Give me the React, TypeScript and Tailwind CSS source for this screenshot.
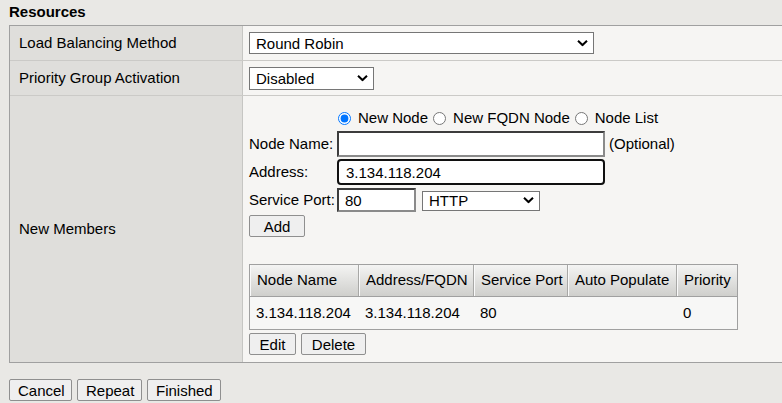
const Chevron = () => (
    <svg className="pointer-events-none absolute right-[6px] top-1/2 -translate-y-1/2" width="11" height="7" viewBox="0 0 11 7">
        <path d="M1 1.2 L5.5 5.5 L10 1.2" fill="none" stroke="#000" strokeWidth="2" />
    </svg>
);

const Select = ({ value, options, className }: { value: string; options: string[]; className: string }) => (
    <div className={`relative ${className}`}>
        <select
            defaultValue={value}
            className="h-full w-full appearance-none border border-[#767676] bg-white pl-[6px] pr-6 text-[15px] leading-none outline-none"
        >
            {options.map((o) => (
                <option key={o}>{o}</option>
            ))}
        </select>
        <Chevron />
    </div>
);

const Btn = ({ label, className = "" }: { label: string; className?: string }) => (
    <button className={`h-[22px] rounded-[2px] border border-[#8f8f8f] bg-[#efefef] px-[8px] text-[15px] leading-none text-black ${className}`}>
        {label}
    </button>
);

const App = () => {
    const columns = [
        { name: "Node Name", w: "w-[109px]" },
        { name: "Address/FQDN", w: "w-[115px]" },
        { name: "Service Port", w: "w-[94px]" },
        { name: "Auto Populate", w: "w-[109px]" },
        { name: "Priority", w: "flex-1" },
    ];
    const member = ["3.134.118.204", "3.134.118.204", "80", "", "0"];

    return (
        <div className="min-h-[403px] w-full overflow-hidden bg-[#e9e8e5] font-['Liberation_Sans',Arial,sans-serif] text-[15px] text-black">
            <div className="h-[25px] pl-[9px] pt-[3px] font-bold leading-[18px]">Resources</div>

            <div className="ml-[9px] border-y border-l border-[#a0a0a0]">
                {/* Load balancing */}
                <div className="flex h-[35px] border-b border-[#cbcac7]">
                    <div className="flex w-[233px] items-center border-r border-[#c6c6c3] bg-[#dfdedb] pl-[9px]">Load Balancing Method</div>
                    <div className="flex flex-1 items-center bg-[#f6f5f3] pl-[6px]">
                        <Select value="Round Robin" options={["Round Robin", "Ratio (member)", "Least Connections (member)"]} className="h-[22px] w-[345px]" />
                    </div>
                </div>

                {/* Priority group */}
                <div className="flex h-[35px] border-b border-[#cbcac7]">
                    <div className="flex w-[233px] items-center border-r border-[#c6c6c3] bg-[#dfdedb] pl-[9px]">Priority Group Activation</div>
                    <div className="flex flex-1 items-center bg-[#f6f5f3] pl-[6px]">
                        <Select value="Disabled" options={["Disabled", "Less than..."]} className="h-[23px] w-[125px]" />
                    </div>
                </div>

                {/* New members */}
                <div className="flex h-[266px]">
                    <div className="flex w-[233px] items-center border-r border-[#c6c6c3] bg-[#dfdedb] pl-[9px]">New Members</div>
                    <div className="flex flex-1 flex-col bg-[#f6f5f3] pl-[6px] pt-[12px]">
                        <div className="flex h-[20px] items-center pl-[89px]">
                            <input type="radio" name="kind" defaultChecked className="m-0 h-[13px] w-[13px] accent-[#0075ff]" />
                            <span className="ml-[7px] mr-[5px]">New Node</span>
                            <input type="radio" name="kind" className="m-0 h-[13px] w-[13px]" />
                            <span className="ml-[7px] mr-[5px]">New FQDN Node</span>
                            <input type="radio" name="kind" className="m-0 h-[13px] w-[13px]" />
                            <span className="ml-[7px]">Node List</span>
                        </div>

                        <div className="mt-[3px] flex h-[26px] items-center">
                            <span className="w-[88px]">Node Name:</span>
                            <input className="h-[26px] w-[268px] border-2 border-t-[#3c3c3c] border-l-[#3c3c3c] border-r-[#8a8a8a] border-b-[#8a8a8a] bg-white px-2 outline-none" />
                            <span className="ml-[4px]">(Optional)</span>
                        </div>

                        <div className="mt-[2px] flex h-[26px] items-center">
                            <span className="w-[88px]">Address:</span>
                            <input defaultValue="3.134.118.204" className="h-[26px] w-[268px] rounded-[4px] border-2 border-[#101010] bg-white px-[7px] outline-none" />
                        </div>

                        <div className="mt-[3px] flex h-[24px] items-center">
                            <span className="w-[88px]">Service Port:</span>
                            <input defaultValue="80" className="h-[24px] w-[79px] border-2 border-t-[#3c3c3c] border-l-[#3c3c3c] border-r-[#8a8a8a] border-b-[#8a8a8a] bg-white px-[6px] outline-none" />
                            <Select value="HTTP" options={["HTTP", "HTTPS", "FTP"]} className="ml-[6px] h-[20px] w-[118px]" />
                        </div>

                        <div className="mt-[3px]">
                            <Btn label="Add" className="w-[56px]" />
                        </div>

                        <div className="mt-[26px] flex w-[489px] flex-col border border-[#a0a0a0] bg-[#f7f7f6]">
                            <div className="flex h-[32px] border-b border-[#a0a0a0]">
                                {columns.map((c, i) => (
                                    <div
                                        key={c.name}
                                        className={`flex items-center bg-gradient-to-b from-[#f4f4f3] to-[#cfcfcc] pl-[7px] ${c.w} ${i < columns.length - 1 ? "border-r border-r-[#a8a8a6] shadow-[inset_1px_0_0_#fafafa]" : "shadow-[inset_1px_0_0_#fafafa]"}`}
                                    >
                                        {c.name}
                                    </div>
                                ))}
                            </div>
                            <div className="flex h-[32px]">
                                {columns.map((c, i) => (
                                    <div key={c.name} className={`flex items-center pl-[6px] ${c.w}`}>
                                        {member[i]}
                                    </div>
                                ))}
                            </div>
                        </div>

                        <div className="mt-[3px] flex gap-[5px]">
                            <Btn label="Edit" className="h-[21px] w-[47px]" />
                            <Btn label="Delete" className="h-[21px] w-[65px]" />
                        </div>
                    </div>
                </div>
            </div>

            <div className="flex gap-[5px] pl-[9px] pt-[16px]">
                <Btn label="Cancel" className="w-[63px]" />
                <Btn label="Repeat" className="w-[65px]" />
                <Btn label="Finished" className="w-[74px]" />
            </div>
        </div>
    );
};

export default App;
